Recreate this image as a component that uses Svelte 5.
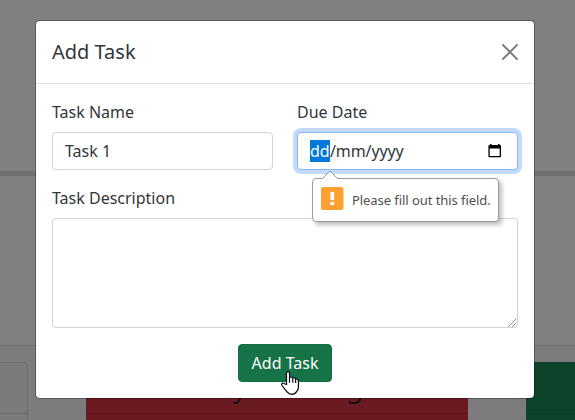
<script>
  let name = $state('Task 1');
  let description = $state('');
</script>

<div class="screen">
  <div class="page" aria-hidden="true">
    <div class="top"></div>
    <div class="middle"></div>
    <div class="board">
      <div class="card plain"><div class="head"></div></div>
      <div class="card red"><div class="head">Daily Working</div></div>
      <div class="card green"><div class="head"></div></div>
    </div>
  </div>

  <div class="modal" role="dialog" aria-label="Add Task">
    <header>
      <h5>Add Task</h5>
      <svg class="close" viewBox="0 0 16 16" width="16" height="16">
        <path d="M.293.293a1 1 0 0 1 1.414 0L8 6.586 14.293.293a1 1 0 1 1 1.414 1.414L9.414 8l6.293 6.293a1 1 0 0 1-1.414 1.414L8 9.414l-6.293 6.293a1 1 0 0 1-1.414-1.414L6.586 8 .293 1.707a1 1 0 0 1 0-1.414z" />
      </svg>
    </header>
    <div class="body">
      <div class="row">
        <div class="col">
          <label for="name">Task Name</label>
          <input id="name" class="control" bind:value={name} />
        </div>
        <div class="col">
          <span class="label">Due Date</span>
          <div class="control date">
            <span class="value"><span class="sel">dd</span>/mm/yyyy</span>
            <svg viewBox="0 0 14 14" width="14" height="14">
              <path fill-rule="evenodd" d="M2 0h1.600v1H10V0h1.600v1h.4q1 0 1 1v10q0 1.300-1 1.300H1.300Q.4 13.300.4 12.300V2q0-1 1-1H2zM1.700 4.500v7.500h10V4.500z" />
            </svg>
          </div>
          <div class="tip">
            <svg class="arrow" viewBox="0 0 18 9" width="18" height="9">
              <path d="M1 9 9 1l8 8" fill="#fff" stroke="#9a9a9a" />
            </svg>
            <svg class="warn" viewBox="0 0 23 23" width="23" height="23">
              <rect width="22.500" height="23" rx="2" fill="#ffa132" />
              <path d="M9.400 5h3.700v8.300H9.400zM9.400 15h3.700v3H9.400z" fill="#fff" />
            </svg>
            <span>Please fill out this field.</span>
          </div>
        </div>
      </div>
      <label for="desc">Task Description</label>
      <div class="area">
        <textarea id="desc" class="control" bind:value={description}></textarea>
        <svg class="grip" viewBox="0 0 9 9" width="9" height="9">
          <path d="M.5 8.500 8.500.5M4.500 8.500l4-4" stroke="#444" stroke-width="1" stroke-dasharray="1 .41" />
        </svg>
      </div>
      <div class="actions">
        <button>Add Task</button>
      </div>
    </div>
  </div>

  <svg class="cursor" viewBox="0 0 18 24" width="18" height="24">
    <path d="M5.500 13.500V2.300q0-1.700 1.500-1.700t1.500 1.700V7q.3-1 1.600-1t1.700 1.300q.6-.8 1.600-.5 1.100.3 1.200 1.500 1-.6 1.900 0 .9.500.9 1.500V16q0 2.600-1.600 4.400-1.800 2.900-5.100 2.900-3.200 0-4.900-2.600L1 14.500Q.2 12.800 1.400 12.100q1-.4 2.100.7z" fill="#fff" stroke="#080818" stroke-width="1.200" />
    <path d="M8.500 7v4.800M11.800 7.800v4M14.600 8.600v3.400" stroke="#080818" stroke-width="1.200" fill="none" />
  </svg>
</div>

<style>
  .screen {
    position: relative;
    width: 575px;
    height: 420px;
    overflow: hidden;
    font: 16px/24px "Noto Sans", "Open Sans", sans-serif;
    color: #32363a;
  }
  .screen * { box-sizing: border-box; }
  .page {
    position: absolute;
    inset: 0;
    display: flex;
    flex-direction: column;
    background: #808080;
  }
  .top { height: 176px; border-bottom: 5px solid #6f7072; }
  .middle { height: 170px; border-bottom: 1px solid #6e6e6e; }
  .board {
    display: flex;
    flex: 1;
    gap: 58px;
    padding-top: 16px;
    background: #7c7c7c;
  }
  .card { height: 58px; flex: none; }
  .head {
    height: 52px;
    border-bottom: 1px solid rgba(0, 0, 0, .14);
    font-size: 28px;
    line-height: 48px;
    letter-spacing: -.2px;
    text-align: center;
    text-indent: -8px;
    color: #101214;
  }
  .plain {
    width: 28px;
    border: 1px solid #6d6d6d;
    border-width: 1px 1px 0 0;
    border-radius: 0 4px 0 0;
    background: #7b7b7b;
  }
  .plain .head { height: 51px; }
  .red { width: 382px; background: #6b1a21; }
  .green { width: 60px; background: #0c432a; }

  .modal {
    position: absolute;
    left: 35px;
    top: 20px;
    width: 500px;
    border: 1px solid rgba(0, 0, 0, .3);
    border-radius: 5px;
    background: #fff;
    background-clip: padding-box;
  }
  header {
    display: flex;
    align-items: center;
    justify-content: space-between;
    height: 63px;
    padding: 0 16px;
    border-bottom: 1px solid #dee2e6;
  }
  h5 { margin: 0; font-size: 20px; font-weight: 400; line-height: 30px; }
  .close { opacity: .5; }
  .body { padding: 16px; }
  .row { display: flex; gap: 24px; margin-bottom: 16px; }
  .col { position: relative; flex: 1; min-width: 0; }
  label, .label { display: block; margin-bottom: 8px; line-height: 24px; }
  .control {
    display: block;
    width: 100%;
    height: 38px;
    margin: 0;
    padding: 6px 12px;
    border: 1px solid #ced4da;
    border-radius: 4px;
    background: #fff;
    font: inherit;
    color: #32363a;
    outline: 0;
  }
  .date {
    display: flex;
    align-items: center;
    justify-content: space-between;
    border-color: #86b7fe;
    box-shadow: 0 0 0 4px #c2daff;
  }
  .date svg { margin-right: 3px; }
  .value { letter-spacing: -.1px; }
  .sel {
    display: inline-block;
    width: 20px;
    height: 22px;
    line-height: 22px;
    letter-spacing: 0;
    background: #0078d7;
    color: #fff;
  }
  .tip {
    position: absolute;
    left: 15px;
    top: 78px;
    z-index: 2;
    display: flex;
    align-items: center;
    gap: 8px;
    width: 187px;
    height: 44px;
    padding: 0 8px 3px;
    border: 1px solid #9a9a9a;
    border-radius: 4px;
    background: #fff;
    box-shadow: 3px 3px 4px rgba(0, 0, 0, .25);
    font-size: 13px;
    letter-spacing: -.06px;
    white-space: nowrap;
    color: #505050;
  }
  .tip span { position: relative; top: 1px; }
  .arrow { position: absolute; left: 8px; top: -9px; }
  .warn { flex: none; }
  .area { position: relative; }
  textarea.control { height: 110px; resize: none; }
  .grip { position: absolute; right: 1px; bottom: 1px; }
  .actions { display: flex; justify-content: center; margin-top: 16px; }
  button {
    width: 94px;
    height: 38px;
    padding: 0;
    border: 1px solid #146c43;
    border-radius: 4px;
    background: #157347;
    font: inherit;
    color: #fff;
  }
  .cursor { position: absolute; left: 281px; top: 371px; }
</style>
